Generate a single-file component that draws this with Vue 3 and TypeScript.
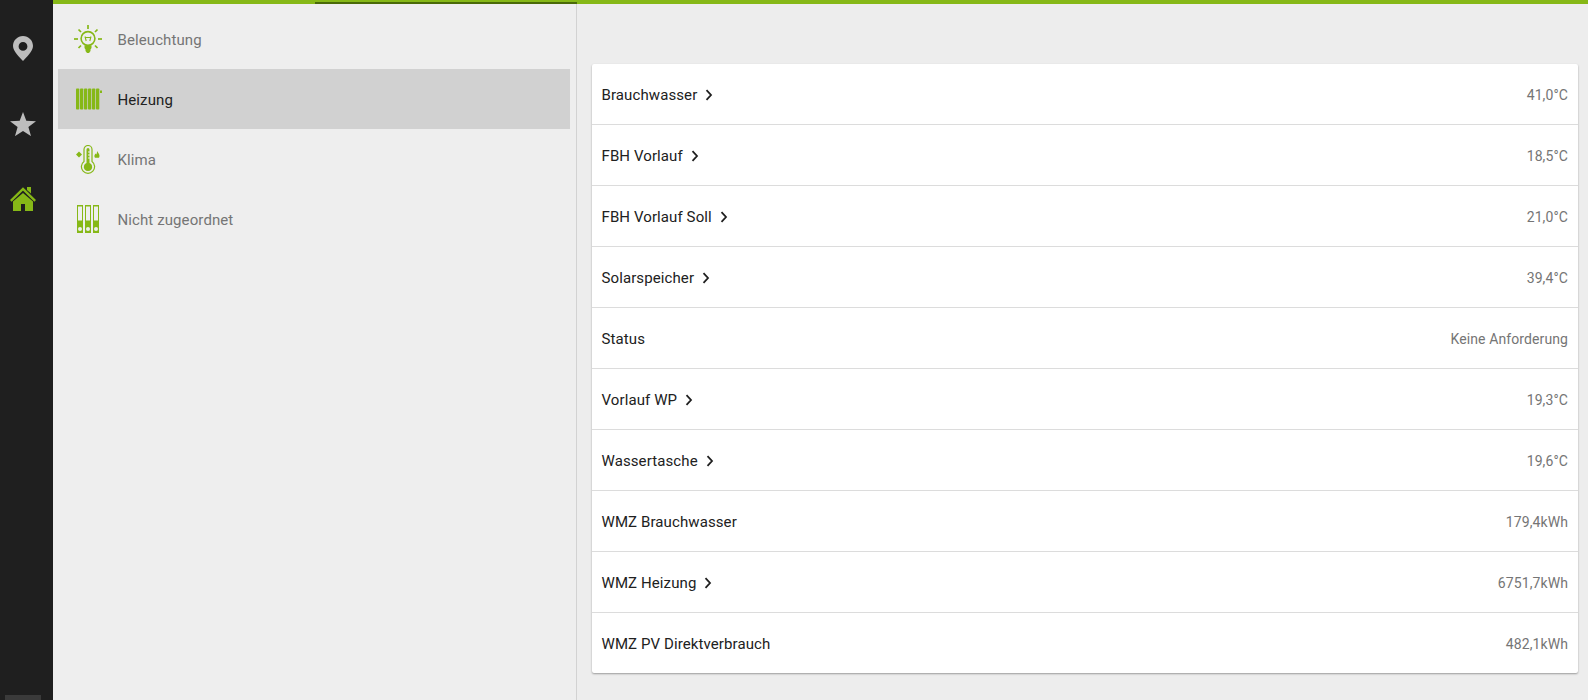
<script setup lang="ts">
interface Row { label: string; value: string; chevron: boolean }
interface Ray { x1: number; y1: number; x2: number; y2: number }
const rows: Row[] = [
  { label: 'Brauchwasser', value: '41,0°C', chevron: true },
  { label: 'FBH Vorlauf', value: '18,5°C', chevron: true },
  { label: 'FBH Vorlauf Soll', value: '21,0°C', chevron: true },
  { label: 'Solarspeicher', value: '39,4°C', chevron: true },
  { label: 'Status', value: 'Keine Anforderung', chevron: false },
  { label: 'Vorlauf WP', value: '19,3°C', chevron: true },
  { label: 'Wassertasche', value: '19,6°C', chevron: true },
  { label: 'WMZ Brauchwasser', value: '179,4kWh', chevron: false },
  { label: 'WMZ Heizung', value: '6751,7kWh', chevron: true },
  { label: 'WMZ PV Direktverbrauch', value: '482,1kWh', chevron: false },
]
const rays: Ray[] = [
  { x1: 14, y1: 0, x2: 14, y2: 4 },
  { x1: 0, y1: 14, x2: 4, y2: 14 },
  { x1: 24, y1: 14, x2: 28, y2: 14 },
  { x1: 4.5, y1: 4.5, x2: 7, y2: 7 },
  { x1: 23.5, y1: 4.5, x2: 21, y2: 7 },
  { x1: 4.5, y1: 23, x2: 7, y2: 20.5 },
  { x1: 23.5, y1: 23, x2: 21, y2: 20.5 },
]
const ribs = [0, 4, 8, 12, 16, 20]
const binders = [0, 8, 16]
</script>

<template>
  <div class="app">
    <nav class="rail">
      <div class="rail-top">
        <button class="rail-btn">
          <svg width="20" height="25" viewBox="0 0 20 25">
            <path fill-rule="evenodd" fill="#bdbdbd" d="M10 0C4.500 0 0 4.400 0 10c0 5.200 6.500 11.300 10 15 3.500-3.700 10-9.800 10-15C20 4.400 15.500 0 10 0zm0 6a4.400 4.400 0 1 1 0 8.800 4.400 4.400 0 0 1 0-8.800z" />
          </svg>
        </button>
        <button class="rail-btn">
          <svg width="26" height="24" viewBox="0 0 26 24">
            <path fill="#bdbdbd" d="M13 0l3.300 8.700 9.700.5-7.600 5.900 2.600 9-8-5.100-8 5.100 2.600-9L0 9.200l9.700-.5z" />
          </svg>
        </button>
        <button class="rail-btn">
          <svg width="26" height="24" viewBox="0 0 26 24">
            <path fill="#86b817" d="M3 14.500L13 6l10 8.500V24h-8v-7h-4v7H3z" />
            <path fill="#86b817" d="M17 0h4v6.500l-4-3.500z" />
            <path fill="none" stroke="#86b817" stroke-width="2.400" d="M.8 13.800L13 2l12.200 11.800" />
          </svg>
        </button>
      </div>
      <div class="rail-tab"></div>
    </nav>

    <div class="main">
      <header class="topbar">
        <div class="topbar-mark"></div>
      </header>
      <div class="columns">
        <aside class="cats">
          <a class="cat">
            <span class="cat-icon">
              <svg width="28" height="28" viewBox="0 0 28 28">
                <g stroke="#86b817" fill="none">
                  <line v-for="(r, i) in rays" :key="i" :x1="r.x1" :y1="r.y1" :x2="r.x2" :y2="r.y2" stroke-width="1.700" />
                  <circle cx="14" cy="13.500" r="6.900" stroke-width="1.600" />
                  <path d="M11 11.500l1.200 4.500M17 11.500l-1.200 4.500M11 12.500h6" stroke-width="1.100" />
                </g>
                <path fill="#86b817" d="M10.500 20.500h7V23l-1 1.500V26l-1.500 2h-2l-1.500-2v-1.500l-1-1.500z" />
              </svg>
            </span>
            <span class="cat-label">Beleuchtung</span>
          </a>
          <a class="cat active">
            <span class="cat-icon">
              <svg width="28" height="22" viewBox="0 0 28 22">
                <rect v-for="r in ribs" :key="r" :x="2 + r" y="0.500" width="3.300" height="21" rx="0.800" fill="#86b817" />
                <rect x="26" y="2.500" width="2.500" height="2.500" fill="#86b817" />
              </svg>
            </span>
            <span class="cat-label">Heizung</span>
          </a>
          <a class="cat">
            <span class="cat-icon">
              <svg width="24" height="29" viewBox="0 0 24 29">
                <path fill="none" stroke="#86b817" stroke-width="1.200" d="M8 16.500V4.500a4 4 0 0 1 8 0v12a6.600 6.600 0 1 1-8 0z" />
                <path fill="#86b817" d="M10.500 18V4.500a1.500 1.500 0 0 1 3 0V18a4.200 4.200 0 1 1-3 0z" />
                <path stroke="#eeeeee" stroke-width="1" d="M12 7h2M12 10h2M12 13h2" />
                <path fill="#86b817" d="M3 6.500l3 3-3 3-3-3zM21 6c.8 1.400 2.500 2.800 2.500 4.800 0 .8-.2 1.500-.5 2h-4c-.4-.5-.6-1-.6-1.800 0-1 .7-1.600 1-2.600.5.300.8.600.9 1 .5-.8.800-2.100.7-3.400z" />
              </svg>
            </span>
            <span class="cat-label">Klima</span>
          </a>
          <a class="cat">
            <span class="cat-icon">
              <svg width="22" height="28" viewBox="0 0 22 28">
                <g v-for="b in binders" :key="b">
                  <rect :x="b" y="0" width="6" height="28" fill="#86b817" />
                  <rect :x="b + 1" y="1.500" width="4" height="14" fill="#eeeeee" />
                  <circle :cx="b + 3" cy="24" r="2" fill="#eeeeee" />
                </g>
              </svg>
            </span>
            <span class="cat-label">Nicht zugeordnet</span>
          </a>
        </aside>

        <section class="content">
          <ul class="card">
            <li v-for="row in rows" :key="row.label" class="row">
              <span class="row-label">{{ row.label }}</span>
              <svg v-if="row.chevron" class="chev" width="8" height="12" viewBox="0 0 8 12">
                <path d="M1.500 1.200L6 6l-4.500 4.800" fill="none" stroke="#1f1f1f" stroke-width="1.800" />
              </svg>
              <span class="row-value">{{ row.value }}</span>
            </li>
          </ul>
        </section>
      </div>
    </div>
  </div>
</template>

<style>
html, body { margin: 0; padding: 0; background: #ededed; }
</style>

<style scoped>
.app {
  display: flex;
  height: 700px;
  overflow: hidden;
  font-family: Roboto, "Liberation Sans", sans-serif;
  font-size: 15px;
  letter-spacing: 0.1px;
  background: #ededed;
}
.rail {
  width: 53px;
  flex: none;
  box-sizing: border-box;
  padding-right: 7px;
  background: #1f1f1f;
  display: flex;
  flex-direction: column;
  justify-content: space-between;
  align-items: center;
}
.rail-top {
  display: flex;
  flex-direction: column;
  padding-top: 11px;
}
.rail-btn {
  width: 46px;
  height: 75px;
  padding: 0;
  border: 0;
  background: none;
  display: flex;
  align-items: center;
  justify-content: center;
}
.rail-tab {
  width: 36px;
  height: 5px;
  background: #3a3a3a;
}
.main {
  flex: 1;
  min-width: 0;
  display: flex;
  flex-direction: column;
}
.topbar {
  height: 4px;
  flex: none;
  background: #86b817;
  position: relative;
}
.topbar-mark {
  position: absolute;
  left: 262px;
  bottom: 0;
  width: 262px;
  height: 2px;
  background: #4a6a08;
}
.columns {
  flex: 1;
  display: flex;
  min-height: 0;
}
.cats {
  width: 524px;
  flex: none;
  box-sizing: border-box;
  padding: 5px 6px 0 5px;
  background: #eeeeee;
  border-right: 1px solid #d2d2d2;
  display: flex;
  flex-direction: column;
}
.cat {
  height: 60px;
  display: flex;
  align-items: center;
  color: #757575;
}
.cat.active {
  background: #d1d1d1;
  color: #212121;
}
.cat-icon {
  width: 60px;
  margin-right: -0.5px;
  flex: none;
  display: flex;
  align-items: center;
  justify-content: center;
}
.cat-label {
  padding-top: 2px;
}
.content {
  flex: 1;
  min-width: 0;
  padding: 60px 10px 0 15px;
}
.card {
  list-style: none;
  margin: 0;
  padding: 0;
  background: #fff;
  border-radius: 2px;
  box-shadow: 0 1px 2px rgba(0, 0, 0, 0.35);
}
.row {
  height: 58px;
  padding: 2px 10px 0 9.5px;
  display: flex;
  align-items: center;
  border-top: 1px solid #dcdcdc;
  color: #212121;
}
.row:first-child {
  border-top: 0;
}
.chev {
  margin-left: 8px;
}
.row-value {
  margin-left: auto;
  font-size: 14px;
  color: #757575;
}
</style>
